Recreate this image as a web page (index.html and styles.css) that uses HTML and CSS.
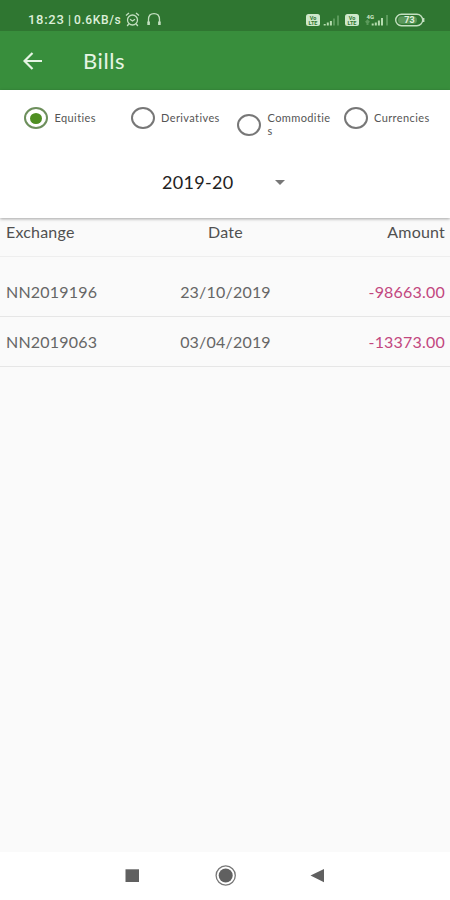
FILE: index.html
```
<!DOCTYPE html>
<html>
<head>
<meta charset="utf-8">
<title>Bills</title>
<link rel="stylesheet" href="styles.css">
</head>
<body>
<div class="screen">
    <div class="status-bar">
        <span class="clock">18:23</span>
        <span class="divider">|</span>
        <span class="speed">0.6KB/s</span>
        <svg class="alarm" width="15" height="15" viewBox="0 0 15 15">
            <circle cx="7.5" cy="8" r="5"/>
            <path d="M1 3.5L4 1M14 3.5L11 1M3.7 12L2.2 14M11.3 12L12.8 14M5 7.3L7.5 9L10 7.3"/>
        </svg>
        <svg class="headset" width="16" height="15" viewBox="0 0 16 15">
            <path d="M2.5 11V7.5C2.5 4 4.5 1.7 8 1.7S13.5 4 13.5 7.5V11"/>
            <path class="cups" d="M2.6 9.5V13M13.4 9.5V13"/>
        </svg>
        <div class="status-right">
            <svg width="122" height="16" viewBox="0 0 122 16">
                <rect class="light" x="1" y="2" width="14" height="12" rx="2.5"/>
                <text class="lte" x="8" y="7.7">Vo</text>
                <text class="lte" x="8" y="12.7">LTE</text>
                <path class="bar" d="M19.7 13.5V12M22.8 13.5V10.5M25.9 13.5V9"/>
                <path class="bar dim" d="M29 13.5V6.5M33 13.5V3.5"/>
                <rect class="light" x="40" y="2" width="14" height="12" rx="2.5"/>
                <text class="lte" x="47" y="7.7">Vo</text>
                <text class="lte" x="47" y="12.7">LTE</text>
                <text class="net" x="61.5" y="6.5">4G</text>
                <path class="bar dim" d="M62.5 13V9M60.8 10.5L62.5 8.7L64.2 10.5"/>
                <path class="bar" d="M67.7 13.5V11.5M70.8 13.5V10.5M73.9 13.5V8.5M77 13.5V6"/>
                <path class="bar dim" d="M82 13.5V3"/>
                <rect class="battery" x="90.7" y="2.2" width="27" height="11.6" rx="5.8"/>
                <rect class="level" x="93" y="4.3" width="19" height="7.4" rx="3.5"/>
                <path class="cap" d="M118.7 6V10"/>
                <text class="percent" x="104.5" y="11.3">73</text>
            </svg>
        </div>
    </div>
    <div class="app-bar">
        <svg class="back" width="20" height="18" viewBox="0 0 20 18">
            <path d="M19 9H2M9.5 1L1.5 9L9.5 17"/>
        </svg>
        <span class="title">Bills</span>
    </div>
    <div class="filters">
        <div class="segments">
            <div class="option">
                <span class="radio checked"></span>
                <span class="label">Equities</span>
            </div>
            <div class="option">
                <span class="radio"></span>
                <span class="label">Derivatives</span>
            </div>
            <div class="option">
                <span class="radio"></span>
                <span class="label">Commoditie<br>s</span>
            </div>
            <div class="option">
                <span class="radio"></span>
                <span class="label">Currencies</span>
            </div>
        </div>
        <div class="year">
            <span class="year-value">2019-20</span>
            <span class="arrow"></span>
        </div>
    </div>
    <div class="table">
        <div class="row head">
            <span class="exchange">Exchange</span>
            <span class="date">Date</span>
            <span class="amount">Amount</span>
        </div>
        <div class="row first">
            <span class="exchange">NN2019196</span>
            <span class="date">23/10/2019</span>
            <span class="amount">-98663.00</span>
        </div>
        <div class="row">
            <span class="exchange">NN2019063</span>
            <span class="date">03/04/2019</span>
            <span class="amount">-13373.00</span>
        </div>
    </div>
    <div class="nav-bar">
        <svg width="450" height="48" viewBox="0 0 450 48">
            <rect class="solid" x="125.5" y="17.3" width="13.5" height="12.7"/>
            <circle class="ring" cx="225.7" cy="23.5" r="9.6"/>
            <circle class="solid" cx="225.7" cy="23.5" r="7"/>
            <path class="solid" d="M310.5 23.5L324 17V30.2Z"/>
        </svg>
    </div>
</div>
</body>
</html>
```

FILE: styles.css
```
body {
    margin: 0;
    font-family: Lato, "Liberation Sans", sans-serif;
}

.screen {
    display: flex;
    flex-direction: column;
    width: 450px;
    height: 900px;
    overflow: hidden;
    background: #fafafa;
}

.status-bar {
    display: flex;
    align-items: center;
    height: 31px;
    padding: 8px 23px 0 28px;
    box-sizing: border-box;
    background: #2f7631;
    color: #dcefd9;
    font-family: Roboto, "Liberation Sans", sans-serif;
    font-weight: 500;
}

.clock {
    width: 37px;
    font-size: 13px;
    letter-spacing: 0.7px;
}

.divider {
    width: 9px;
    text-align: center;
    font-size: 12px;
}

.speed {
    width: 50px;
    font-size: 12px;
    letter-spacing: 0.6px;
    white-space: nowrap;
}

.alarm, .headset {
    fill: none;
    stroke: #c3dfc0;
    stroke-width: 1.3;
}

.alarm {
    margin-left: 1px;
}

.headset {
    margin-left: 6px;
}

.cups {
    stroke-width: 2.6;
}

.status-right {
    display: flex;
    margin-left: auto;
}

.light {
    fill: #cfe8cb;
}

.lte {
    fill: #2f7631;
    font-size: 5.5px;
    font-weight: bold;
    text-anchor: middle;
}

.net {
    fill: #cfe8cb;
    font-size: 6px;
    font-weight: bold;
}

.bar {
    fill: none;
    stroke: #b5dcae;
    stroke-width: 2;
}

.dim {
    stroke: #5b9a5b;
}

.battery, .cap {
    fill: none;
    stroke: #c3dfc0;
    stroke-width: 1.4;
}

.level {
    fill: #5a975a;
}

.percent {
    fill: #e0f2dd;
    font-size: 9px;
    font-weight: bold;
    text-anchor: middle;
}

.app-bar {
    display: flex;
    align-items: center;
    height: 59px;
    padding-left: 23px;
    background: #388e3c;
    color: #e6f5e4;
}

.back {
    fill: none;
    stroke: #e6f5e4;
    stroke-width: 2.2;
}

.title {
    margin-left: 40px;
    font-size: 22px;
    letter-spacing: 0.6px;
}

.filters {
    position: relative;
    height: 128px;
    background: #fff;
    box-shadow: 0 1px 3px rgba(0, 0, 0, 0.35);
}

.segments {
    display: flex;
    height: 54px;
    padding: 16px 0 0 24px;
}

.option {
    display: flex;
    align-items: center;
    align-self: flex-start;
    width: 107px;
    min-height: 24px;
}

.radio {
    display: flex;
    flex: none;
    align-items: center;
    justify-content: center;
    width: 24px;
    height: 22px;
    box-sizing: border-box;
    border: 2px solid #777;
    border-radius: 50%;
}

.checked {
    border-color: #6d8f5c;
}

.checked::after {
    content: "";
    width: 12px;
    height: 11px;
    border-radius: 50%;
    background: #4f8f22;
}

.label {
    padding: 5px 0 6px 6.5px;
    color: #555;
    font-size: 11px;
    line-height: 13px;
    letter-spacing: 0.4px;
}

.year {
    display: flex;
    align-items: center;
    padding: 10px 0 0 162px;
}

.year-value {
    width: 113px;
    color: #222;
    font-size: 18px;
    line-height: 24px;
    letter-spacing: 0.3px;
}

.arrow {
    border: 5px solid transparent;
    border-top-color: #777;
    border-bottom: 0;
}

.table {
    flex: 1;
}

.row {
    display: grid;
    grid-template-columns: 1fr 1fr 1fr;
    align-items: center;
    height: 50px;
    padding: 0 5px 0 6px;
    box-sizing: border-box;
    border-bottom: 1px solid #e6e6e6;
    color: #666;
    font-size: 16px;
    letter-spacing: 0.2px;
}

.head {
    height: 39px;
    padding-bottom: 12px;
    color: #505050;
    border-bottom-color: #eee;
}

.first {
    height: 60px;
    padding-top: 10px;
}

.date {
    text-align: center;
}

.amount {
    text-align: right;
    color: #c2477f;
}

.head .amount {
    color: #505050;
}

.nav-bar {
    height: 48px;
    background: #fff;
}

.solid {
    fill: #606060;
}

.ring {
    fill: none;
    stroke: #777;
    stroke-width: 1.3;
}
```
